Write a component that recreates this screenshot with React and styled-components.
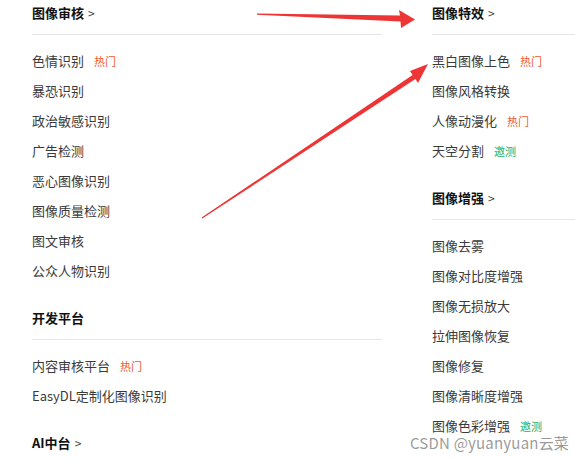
import React from "react";
import styled, { createGlobalStyle } from "styled-components";

const Global = createGlobalStyle`
  html, body { margin: 0; padding: 0; background: #fff; }
  body {
    font-family: "Noto Sans CJK SC", "Noto Sans", sans-serif;
    width: 575px; height: 461px; overflow: hidden;
  }
`;

const Page = styled.div`
  position: relative;
  width: 575px;
  height: 461px;
  overflow: hidden;
  display: flex;
  gap: 50px;
  padding-left: 32px;
  box-sizing: border-box;
`;

const Column = styled.div`
  width: 350px;
  flex-shrink: 0;
  display: flex;
  flex-direction: column;
  gap: 19px;
`;

const Section = styled.section`
  display: flex;
  flex-direction: column;
`;

const Heading = styled.div`
  height: 26px;
  line-height: 26px;
  padding-bottom: 8px;
  border-bottom: 1px solid #e6e6e6;
  font-size: 13px;
  font-weight: 700;
  color: #111;
  display: flex;
  align-items: center;
`;

const Chevron = styled.span`
  font-weight: 400;
  color: #444;
  margin-left: 4px;
  font-size: 12px;
`;

const List = styled.ul`
  list-style: none;
  margin: 11px 0 0;
  padding: 0;
`;

const Item = styled.li`
  height: 30px;
  line-height: 30px;
  font-size: 13px;
  color: #3a3a3a;
  display: flex;
  align-items: center;
`;

const Tag = styled.span`
  margin-left: 10px;
  font-size: 11px;
  color: ${(p) => (p.$kind === "beta" ? "#1aaf6c" : "#ee5a2f")};
`;

const Arrows = styled.svg`
  position: absolute;
  left: 0;
  top: 0;
  pointer-events: none;
`;

const Watermark = styled.div`
  position: absolute;
  left: 410px;
  top: 432px;
  font-size: 15px;
  line-height: 22px;
  color: rgba(120, 120, 120, 0.75);
  text-shadow: 1px 0 0 rgba(255,255,255,0.6);
  white-space: nowrap;
  letter-spacing: 0.2px;
`;

const left = [
  {
    title: "图像审核",
    more: true,
    items: [
      ["色情识别", "hot"],
      ["暴恐识别"],
      ["政治敏感识别"],
      ["广告检测"],
      ["恶心图像识别"],
      ["图像质量检测"],
      ["图文审核"],
      ["公众人物识别"],
    ],
  },
  {
    title: "开发平台",
    items: [["内容审核平台", "hot"], ["EasyDL定制化图像识别"]],
  },
  { title: "AI中台", more: true, items: [] },
];

const right = [
  {
    title: "图像特效",
    more: true,
    items: [
      ["黑白图像上色", "hot"],
      ["图像风格转换"],
      ["人像动漫化", "hot"],
      ["天空分割", "beta"],
    ],
  },
  {
    title: "图像增强",
    more: true,
    items: [
      ["图像去雾"],
      ["图像对比度增强"],
      ["图像无损放大"],
      ["拉伸图像恢复"],
      ["图像修复"],
      ["图像清晰度增强"],
      ["图像色彩增强", "beta"],
    ],
  },
];

function Block({ s }) {
  return (
    <Section>
      <Heading>
        {s.title}
        {s.more && <Chevron>&gt;</Chevron>}
      </Heading>
      {s.items.length > 0 && (
        <List>
          {s.items.map(([name, tag]) => (
            <Item key={name}>
              {name}
              {tag && <Tag $kind={tag}>{tag === "hot" ? "热门" : "邀测"}</Tag>}
            </Item>
          ))}
        </List>
      )}
    </Section>
  );
}

export default function App() {
  return (
    <>
      <Global />
      <Page>
        <Column>
          {left.map((s) => (
            <Block key={s.title} s={s} />
          ))}
        </Column>
        <Column>
          {right.map((s) => (
            <Block key={s.title} s={s} />
          ))}
        </Column>
        <Arrows width="575" height="461" viewBox="0 0 575 461">
          <polygon
            points="257,13.5 400,15.5 399,10 415,19.5 401,28 400.5,21.5 257,14.8"
            fill="#ee3535"
          />
          <polygon
            points="202.3,218.6 415.4,79.1 418,83 428,64 410,71 412.6,74.9 201.6,217.6"
            fill="#ee3535"
          />
        </Arrows>
        <Watermark>CSDN @yuanyuan云菜</Watermark>
      </Page>
    </>
  );
}
